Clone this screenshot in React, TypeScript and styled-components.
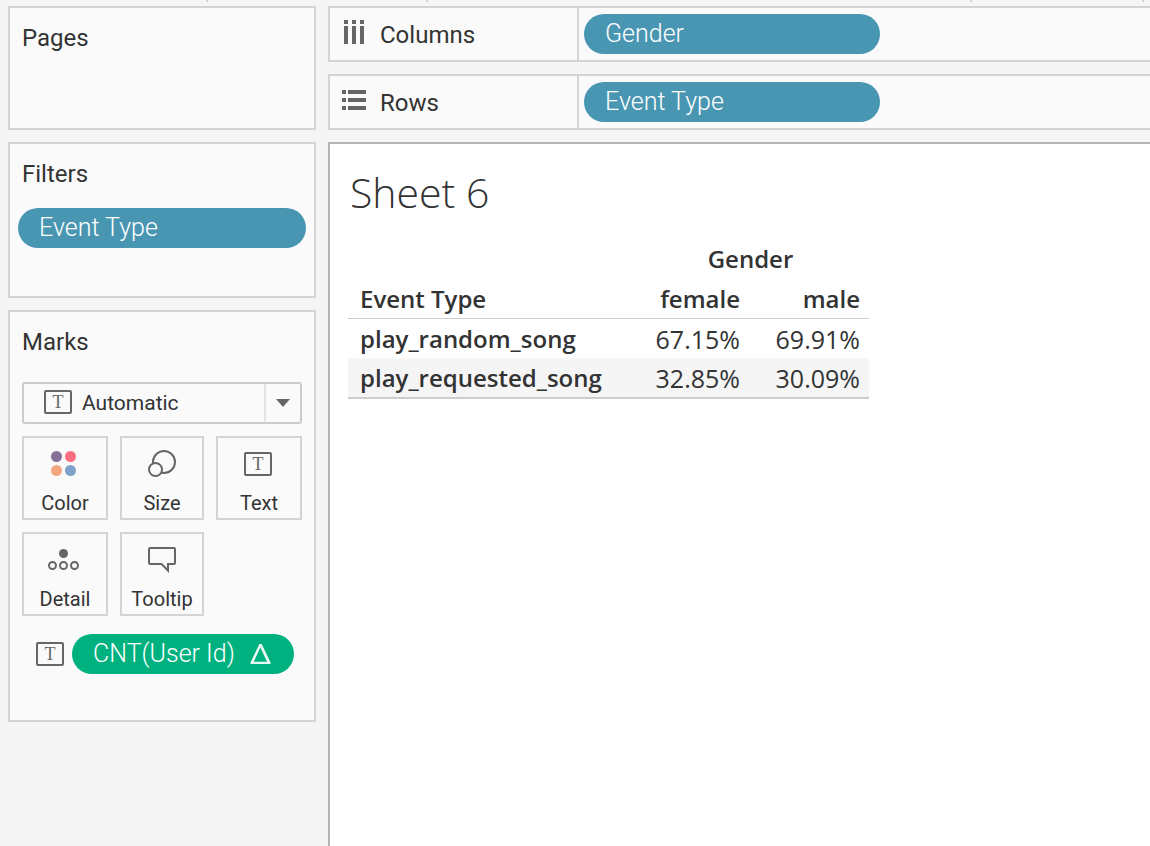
import React from "react";
import styled, { createGlobalStyle } from "styled-components";

const ui = `Roboto, "Liberation Sans", sans-serif`;
const viz = `"Open Sans", "Noto Sans", sans-serif`;

const GlobalStyle = createGlobalStyle`
  *, *::before, *::after { box-sizing: border-box; }
  body { margin: 0; background: #f5f5f5; color: #333; font-family: ${ui}; }
  button, select { font-family: inherit; color: inherit; }
`;

const Page = styled.div`
  display: flex;
  flex-direction: column;
  min-height: 100vh;
`;

const ToolbarEdge = styled.div`
  display: flex;
  height: 2px;
  margin-bottom: 4px;
`;

const ToolbarGroup = styled.div<{ $width: number }>`
  flex: 0 0 ${(p) => p.$width}px;
  border-right: 2px solid #d4d4d4;
`;

const Workspace = styled.div`
  display: flex;
  flex: 1;
  gap: 12px;
  padding-left: 8px;
`;

const Sidebar = styled.aside`
  display: flex;
  flex: 0 0 308px;
  flex-direction: column;
  gap: 12px;
`;

const Card = styled.section<{ $bottom: number }>`
  padding: 15px 8px ${(p) => p.$bottom}px;
  border: 2px solid #d4d4d4;
  background: #fafafa;
`;

const CardTitle = styled.h2`
  margin: 0 4px;
  font-size: 24px;
  font-weight: 400;
  line-height: 30px;
`;

const Pill = styled.button<{ $measure?: boolean; $width?: string }>`
  display: flex;
  align-items: center;
  gap: 15px;
  width: ${(p) => p.$width ?? "100%"};
  height: 40px;
  padding: 0 21px;
  border: 0;
  border-radius: 20px;
  background: ${(p) => (p.$measure ? "#00b180" : "#4996b2")};
  color: #fff;
  font-size: 25px;
  font-weight: 300;
  line-height: 28px;
  text-align: left;
`;

const FilterList = styled.div`
  margin-top: 19px;
`;

const MarksBody = styled.div`
  margin: 25px 4px 0;
`;

const MarkType = styled.label`
  display: flex;
  align-items: center;
  height: 42px;
  padding-left: 20px;
  border: 2px solid #ccc;
  border-radius: 3px;

  > svg {
    margin-bottom: 2px;
  }
`;

const MarkSelect = styled.select`
  flex: 1;
  height: 38px;
  padding: 0 10px;
  border: 0;
  background: transparent;
  font-size: 21px;
  appearance: none;
`;

const SelectArrow = styled.span`
  display: flex;
  align-items: center;
  align-self: stretch;
  justify-content: center;
  width: 36px;
  border-left: 2px solid #e4e4e4;
`;

const MarkGrid = styled.div`
  display: grid;
  grid-template-columns: 86px 84px 86px;
  gap: 12px;
  margin-top: 12px;
`;

const MarkButton = styled.button`
  display: flex;
  flex-direction: column;
  align-items: center;
  gap: 11px;
  height: 84px;
  padding: 12px 0 0;
  border: 2px solid #d4d4d4;
  background: #fafafa;
  font-size: 20px;
  line-height: 28px;
`;

const MarkField = styled.div`
  display: flex;
  align-items: center;
  gap: 8px;
  margin: 18px 8px 0 14px;
`;

const Main = styled.main`
  display: flex;
  flex: 1;
  flex-direction: column;
  gap: 12px;
  min-width: 0;
`;

const Shelf = styled.section`
  display: flex;
  height: 56px;
  border: 2px solid #d4d4d4;
  border-right: 0;
  background: #fafafa;
`;

const ShelfTitle = styled.h2`
  display: flex;
  align-items: center;
  gap: 14px;
  flex: 0 0 249px;
  margin: 0;
  padding-left: 12px;
  border-right: 2px solid #d4d4d4;
  font-size: 24px;
  font-weight: 400;
  line-height: 30px;

  svg {
    margin-bottom: 4px;
  }

  span {
    padding-top: 2px;
  }
`;

const ShelfFields = styled.div`
  flex: 1;
  padding: 6px 5px;
`;

const Sheet = styled.section`
  flex: 1;
  padding: 20px 18px;
  border: solid #b3b3b3;
  border-width: 2px 0 0 2px;
  background: #fff;
  font-family: ${viz};
`;

const SheetTitle = styled.h1`
  margin: 0 2px 20px;
  font-size: 41px;
  font-weight: 300;
  line-height: 56px;
`;

const Crosstab = styled.table`
  width: 521px;
  border-collapse: separate;
  border-spacing: 0;
  border-bottom: 2px solid #ccc;
  font-size: 24px;
  line-height: 36px;
  table-layout: fixed;
`;

const HeadCell = styled.th<{ $align?: string; $width?: number; $rule?: boolean }>`
  width: ${(p) => (p.$width ? `${p.$width}px` : "auto")};
  height: ${(p) => (p.$rule ? 40 : 39)}px;
  padding: ${(p) => (p.$rule ? "0 9px 0 12px" : "0 9px 2px 12px")};
  border-bottom: ${(p) => (p.$rule ? "1px solid #ccc" : "0")};
  font-weight: 600;
  text-align: ${(p) => p.$align ?? "left"};
`;

const BodyRow = styled.tr<{ $band?: boolean }>`
  background: ${(p) => (p.$band ? "#f5f5f5" : "transparent")};
`;

const RowHead = styled.th`
  height: 39px;
  padding: 0 0 0 12px;
  font-weight: 600;
  text-align: left;
`;

const Value = styled.td`
  height: 39px;
  padding: 0 9px 0 0;
  font-size: 25px;
  text-align: right;
`;

const TextBox = ({ x = 0, y = 0 }: { x?: number; y?: number }) => (
  <g>
    <rect x={x + 1} y={y + 1} width="26" height="22" rx="1" fill="none" stroke="#666" strokeWidth="2" />
    <text x={x + 14} y={y + 18} textAnchor="middle" fontFamily="Liberation Serif, serif" fontSize="18" fontWeight="400" fill="#666">
      T
    </text>
  </g>
);

const TextIcon = () => (
  <svg width="28" height="24" viewBox="0 0 28 24" aria-hidden="true">
    <TextBox />
  </svg>
);

const marks = [
  {
    name: "Color",
    icon: (
      <>
        <circle cx="7.5" cy="6.5" r="5.5" fill="#866f98" />
        <circle cx="21.5" cy="6.5" r="5.5" fill="#fa6f80" />
        <circle cx="7.5" cy="20.5" r="5.5" fill="#f3a67e" />
        <circle cx="21.5" cy="20.5" r="5.5" fill="#7fa2cb" />
      </>
    ),
  },
  {
    name: "Size",
    icon: (
      <g fill="#fafafa" stroke="#666" strokeWidth="2">
        <circle cx="18" cy="12" r="11" />
        <circle cx="9.5" cy="19.5" r="6.5" />
      </g>
    ),
  },
  { name: "Text", icon: <TextBox x={1} y={2} /> },
  {
    name: "Detail",
    icon: (
      <g fill="none" stroke="#666" strokeWidth="2">
        <circle cx="14.5" cy="7.5" r="4.5" fill="#666" stroke="none" />
        <circle cx="3.5" cy="19.5" r="3.5" />
        <circle cx="14.5" cy="19.5" r="3.5" />
        <circle cx="25.5" cy="19.5" r="3.5" />
      </g>
    ),
  },
  {
    name: "Tooltip",
    icon: (
      <path
        d="M4 2H28Q29 2 29 3V17Q29 18 28 18H22V24.5L15.5 18H4Q3 18 3 17V3Q3 2 4 2Z"
        fill="none"
        stroke="#666"
        strokeWidth="2"
      />
    ),
  },
];

const rows = [
  { name: "play_random_song", values: ["67.15%", "69.91%"] },
  { name: "play_requested_song", values: ["32.85%", "30.09%"] },
];

export default function App() {
  return (
    <Page>
      <GlobalStyle />
      <ToolbarEdge>
        {[208, 220, 544, 172].map((w) => (
          <ToolbarGroup key={w} $width={w} />
        ))}
      </ToolbarEdge>
      <Workspace>
        <Sidebar>
          <Card $bottom={75}>
            <CardTitle>Pages</CardTitle>
          </Card>
          <Card $bottom={48}>
            <CardTitle>Filters</CardTitle>
            <FilterList>
              <Pill type="button">Event Type</Pill>
            </FilterList>
          </Card>
          <Card $bottom={46}>
            <CardTitle>Marks</CardTitle>
            <MarksBody>
              <MarkType>
                <TextIcon />
                <MarkSelect aria-label="Mark type" defaultValue="Automatic">
                  <option>Automatic</option>
                </MarkSelect>
                <SelectArrow>
                  <svg width="14" height="8" viewBox="0 0 14 8" aria-hidden="true">
                    <path d="M0 0H14L7 8Z" fill="#666" />
                  </svg>
                </SelectArrow>
              </MarkType>
              <MarkGrid>
                {marks.map((m) => (
                  <MarkButton type="button" key={m.name}>
                    <svg width="32" height="28" viewBox="0 0 32 28" overflow="visible" aria-hidden="true">
                      {m.icon}
                    </svg>
                    {m.name}
                  </MarkButton>
                ))}
              </MarkGrid>
              <MarkField>
                <TextIcon />
                <Pill type="button" $measure $width="222px">
                  CNT(User Id)
                  <svg width="22" height="20" viewBox="0 0 22 20" aria-hidden="true">
                    <path
                      fillRule="evenodd"
                      fill="#e8f8f3"
                      d="M9.3 0H11.7L20.5 18.5V20H0.5V18.5ZM10.4 3.6L3.8 17.8H17Z"
                    />
                  </svg>
                </Pill>
              </MarkField>
            </MarksBody>
          </Card>
        </Sidebar>
        <Main>
          <Shelf>
            <ShelfTitle>
              <svg width="24" height="24" viewBox="0 0 24 24" fill="#666" aria-hidden="true">
                <path d="M2 0h4v4H2zM10 0h4v4h-4zM18 0h4v4h-4zM2 6h4v18H2zM10 6h4v18h-4zM18 6h4v18h-4z" />
              </svg>
              <span>Columns</span>
            </ShelfTitle>
            <ShelfFields>
              <Pill type="button" $width="296px">Gender</Pill>
            </ShelfFields>
          </Shelf>
          <Shelf>
            <ShelfTitle>
              <svg width="24" height="24" viewBox="0 0 24 24" fill="#666" aria-hidden="true">
                <path d="M0 2h4v4H0zM6 2h18v4H6zM0 10h4v4H0zM6 10h18v4H6zM0 18h4v4H0zM6 18h18v4H6z" />
              </svg>
              <span>Rows</span>
            </ShelfTitle>
            <ShelfFields>
              <Pill type="button" $width="296px">Event Type</Pill>
            </ShelfFields>
          </Shelf>
          <Sheet>
            <SheetTitle>Sheet 6</SheetTitle>
            <Crosstab>
              <thead>
                <tr>
                  <HeadCell as="td" />
                  <HeadCell colSpan={2} $align="center" $width={240} scope="colgroup">Gender</HeadCell>
                </tr>
                <tr>
                  <HeadCell $rule scope="col">Event Type</HeadCell>
                  <HeadCell $rule $align="right" scope="col">female</HeadCell>
                  <HeadCell $rule $align="right" scope="col">male</HeadCell>
                </tr>
              </thead>
              <tbody>
                {rows.map((r, i) => (
                  <BodyRow key={r.name} $band={i % 2 === 1}>
                    <RowHead scope="row">{r.name}</RowHead>
                    {r.values.map((v) => (
                      <Value key={v}>{v}</Value>
                    ))}
                  </BodyRow>
                ))}
              </tbody>
            </Crosstab>
          </Sheet>
        </Main>
      </Workspace>
    </Page>
  );
}
